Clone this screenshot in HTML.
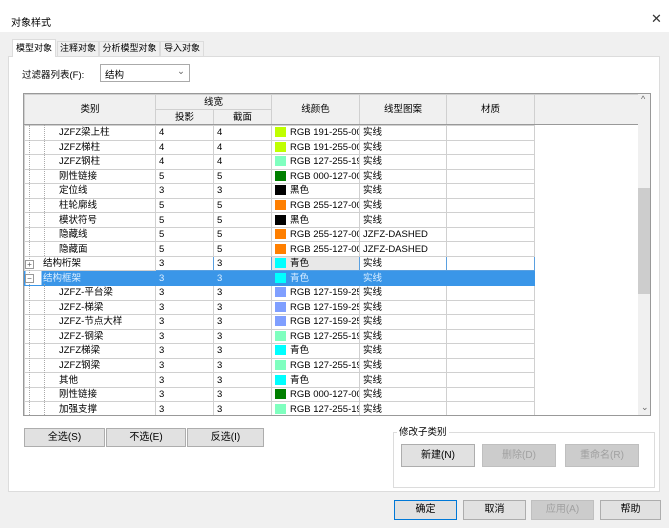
<!DOCTYPE html>
<html><head><meta charset="utf-8"><style>
*{margin:0;padding:0;box-sizing:border-box}
body{width:669px;height:528px;background:#f0f0f0;font-family:"Liberation Sans","Noto Sans CJK SC",sans-serif;font-size:10px;color:#000;position:relative;overflow:hidden}
.a{position:absolute;white-space:nowrap}
.btn{position:absolute;background:#e1e1e1;border:1px solid #adadad;text-align:center;font-size:10px}
.dis{color:#a0a0a0;background:#cccccc;border-color:#bfbfbf}
.tab{position:absolute;top:41px;height:15px;border:1px solid #dcdcdc;border-bottom:none;font-size:9px;line-height:13px;text-align:center;white-space:nowrap;overflow:hidden}
table{border-collapse:collapse;table-layout:fixed}
td{height:14.55px;border:1px solid #d0d0d0;padding:0 3px;white-space:nowrap;overflow:hidden;font-size:9.5px;line-height:13px}
td.e{border:none}
.sw{display:inline-block;width:11px;height:10px;vertical-align:-2px;margin-right:4px}
.sel td{background:#3a96e8;color:#dbeeff;border-color:#3a96e8}
</style></head><body>
<div class="a" style="left:0;top:0;width:669px;height:32px;background:#fff"></div>
<div class="a" style="left:11px;top:14px;font-size:10px">对象样式</div>
<div class="a" style="left:651px;top:11px;font-size:13px;color:#333">✕</div>
<div class="a" style="left:8px;top:56px;width:652px;height:436px;background:#fff;border:1px solid #dcdcdc"></div>
<div class="tab" style="left:12px;top:39px;width:44px;height:18px;background:#fff;line-height:17px">模型对象</div>
<div class="tab" style="left:57px;width:42px">注释对象</div>
<div class="tab" style="left:99px;width:61px">分析模型对象</div>
<div class="tab" style="left:160px;width:44px">导入对象</div>
<div class="a" style="left:22px;top:67px;font-size:9.5px">过滤器列表(F):</div>
<div class="a" style="left:100px;top:64px;width:90px;height:18px;border:1px solid #aaa;background:#fff;padding:2px 4px;font-size:9.5px">结构<span class="a" style="left:76px;top:1px;color:#666">⌄</span></div>
<div class="a" style="left:23px;top:93px;width:628px;height:323px;border:1px solid #999;background:#fff;overflow:hidden">
<table style="position:absolute;left:0;top:0;width:614px">
<colgroup><col style="width:131px"><col style="width:58px"><col style="width:58px"><col style="width:88px"><col style="width:87px"><col style="width:88px"><col style="width:104px"></colgroup>
<tr style="background:#f0f0f0"><td rowspan="2" style="text-align:center;height:30px">类别</td><td colspan="2" style="text-align:center;height:15px">线宽</td><td rowspan="2" style="text-align:center">线颜色</td><td rowspan="2" style="text-align:center">线型图案</td><td rowspan="2" style="text-align:center">材质</td><td rowspan="2"></td></tr>
<tr style="background:#f0f0f0"><td style="text-align:center;height:15px">投影</td><td style="text-align:center">截面</td></tr>
</table>
<div class="a" style="left:0;top:30px;width:614px;border-top:1px solid #999"></div>
<table style="position:absolute;left:0;top:31px;width:614px">
<colgroup><col style="width:131px"><col style="width:58px"><col style="width:58px"><col style="width:88px"><col style="width:87px"><col style="width:88px"><col style="width:104px"></colgroup>
<tr><td style="padding-left:34px">JZFZ梁上柱</td><td>4</td><td>4</td><td><span class="sw" style="background:#bfff00"></span>RGB 191-255-000</td><td>实线</td><td></td><td class="e"></td></tr>
<tr><td style="padding-left:34px">JZFZ梯柱</td><td>4</td><td>4</td><td><span class="sw" style="background:#bfff00"></span>RGB 191-255-000</td><td>实线</td><td></td><td class="e"></td></tr>
<tr><td style="padding-left:34px">JZFZ钢柱</td><td>4</td><td>4</td><td><span class="sw" style="background:#7fffbf"></span>RGB 127-255-191</td><td>实线</td><td></td><td class="e"></td></tr>
<tr><td style="padding-left:34px">刚性链接</td><td>5</td><td>5</td><td><span class="sw" style="background:#007f00"></span>RGB 000-127-000</td><td>实线</td><td></td><td class="e"></td></tr>
<tr><td style="padding-left:34px">定位线</td><td>3</td><td>3</td><td><span class="sw" style="background:#000"></span>黑色</td><td>实线</td><td></td><td class="e"></td></tr>
<tr><td style="padding-left:34px">柱轮廓线</td><td>5</td><td>5</td><td><span class="sw" style="background:#ff7f00"></span>RGB 255-127-000</td><td>实线</td><td></td><td class="e"></td></tr>
<tr><td style="padding-left:34px">模状符号</td><td>5</td><td>5</td><td><span class="sw" style="background:#000"></span>黑色</td><td>实线</td><td></td><td class="e"></td></tr>
<tr><td style="padding-left:34px">隐藏线</td><td>5</td><td>5</td><td><span class="sw" style="background:#ff7f00"></span>RGB 255-127-000</td><td>JZFZ-DASHED</td><td></td><td class="e"></td></tr>
<tr><td style="padding-left:34px">隐藏面</td><td>5</td><td>5</td><td><span class="sw" style="background:#ff7f00"></span>RGB 255-127-000</td><td>JZFZ-DASHED</td><td></td><td class="e"></td></tr>
<tr><td style="padding-left:18px">结构桁架</td><td style="border:1px solid #5aa0e0">3</td><td style="border:1px solid #5aa0e0">3</td><td style="border:1px solid #5aa0e0;background:#e8e8e8"><span class="sw" style="background:#00ffff"></span>青色</td><td style="border:1px solid #5aa0e0">实线</td><td style="border:1px solid #5aa0e0"></td><td class="e"></td></tr>
<tr class="sel"><td style="padding-left:18px;background:linear-gradient(90deg,#fff 16px,#3a96e8 16px)">结构框架</td><td>3</td><td>3</td><td><span class="sw" style="background:#00ffff"></span>青色</td><td>实线</td><td></td><td class="e" style="background:#fff"></td></tr>
<tr><td style="padding-left:34px">JZFZ-平台梁</td><td>3</td><td>3</td><td><span class="sw" style="background:#7f9fff"></span>RGB 127-159-255</td><td>实线</td><td></td><td class="e"></td></tr>
<tr><td style="padding-left:34px">JZFZ-梯梁</td><td>3</td><td>3</td><td><span class="sw" style="background:#7f9fff"></span>RGB 127-159-255</td><td>实线</td><td></td><td class="e"></td></tr>
<tr><td style="padding-left:34px">JZFZ-节点大样</td><td>3</td><td>3</td><td><span class="sw" style="background:#7f9fff"></span>RGB 127-159-255</td><td>实线</td><td></td><td class="e"></td></tr>
<tr><td style="padding-left:34px">JZFZ-钢梁</td><td>3</td><td>3</td><td><span class="sw" style="background:#7fffbf"></span>RGB 127-255-191</td><td>实线</td><td></td><td class="e"></td></tr>
<tr><td style="padding-left:34px">JZFZ梯梁</td><td>3</td><td>3</td><td><span class="sw" style="background:#00ffff"></span>青色</td><td>实线</td><td></td><td class="e"></td></tr>
<tr><td style="padding-left:34px">JZFZ钢梁</td><td>3</td><td>3</td><td><span class="sw" style="background:#7fffbf"></span>RGB 127-255-191</td><td>实线</td><td></td><td class="e"></td></tr>
<tr><td style="padding-left:34px">其他</td><td>3</td><td>3</td><td><span class="sw" style="background:#00ffff"></span>青色</td><td>实线</td><td></td><td class="e"></td></tr>
<tr><td style="padding-left:34px">刚性链接</td><td>3</td><td>3</td><td><span class="sw" style="background:#007f00"></span>RGB 000-127-000</td><td>实线</td><td></td><td class="e"></td></tr>
<tr><td style="padding-left:34px">加强支撑</td><td>3</td><td>3</td><td><span class="sw" style="background:#7fffbf"></span>RGB 127-255-191</td><td>实线</td><td></td><td class="e"></td></tr>
<tr><td></td><td></td><td></td><td><span class="sw" style="background:#333"></span></td><td></td><td></td><td class="e"></td></tr>
</table>
<div class="a" style="left:5px;top:31px;height:292px;border-left:1px dotted #aaa"></div>
<div class="a" style="left:20px;top:31px;height:131px;border-left:1px dotted #aaa"></div>
<div class="a" style="left:20px;top:190px;height:133px;border-left:1px dotted #aaa"></div>
<div class="a" style="left:1px;top:166px;width:9px;height:9px;border:1px solid #999;background:#fff;font-size:8px;line-height:7px;text-align:center;color:#555">+</div>
<div class="a" style="left:1px;top:180px;width:9px;height:9px;border:1px solid #999;background:#fff;font-size:8px;line-height:7px;text-align:center;color:#555">−</div>
<div class="a" style="left:614px;top:0;width:13px;height:323px;background:#f0f0f0"></div>
<div class="a" style="left:614px;top:94px;width:13px;height:106px;background:#cdcdcd"></div>
<div class="a" style="left:617px;top:0px;font-size:9px;color:#666">^</div>
<div class="a" style="left:617px;top:308px;font-size:9px;color:#666">⌄</div>
</div>
<div class="btn" style="left:24px;top:428px;width:81px;height:19px;line-height:17px">全选(S)</div>
<div class="btn" style="left:106px;top:428px;width:80px;height:19px;line-height:17px">不选(E)</div>
<div class="btn" style="left:187px;top:428px;width:77px;height:19px;line-height:17px">反选(I)</div>
<div class="a" style="left:393px;top:432px;width:262px;height:56px;border:1px solid #dcdcdc"></div>
<div class="a" style="left:397px;top:424px;background:#fff;padding:0 2px;font-size:9.5px">修改子类别</div>
<div class="btn" style="left:401px;top:444px;width:74px;height:23px;line-height:21px">新建(N)</div>
<div class="btn dis" style="left:482px;top:444px;width:74px;height:23px;line-height:21px">删除(D)</div>
<div class="btn dis" style="left:565px;top:444px;width:74px;height:23px;line-height:21px">重命名(R)</div>
<div class="btn" style="left:394px;top:500px;width:63px;height:20px;line-height:18px;border:1px solid #0078d7">确定</div>
<div class="btn" style="left:463px;top:500px;width:63px;height:20px;line-height:18px">取消</div>
<div class="btn dis" style="left:531px;top:500px;width:63px;height:20px;line-height:18px">应用(A)</div>
<div class="btn" style="left:600px;top:500px;width:61px;height:20px;line-height:18px">帮助</div>
</body></html>
